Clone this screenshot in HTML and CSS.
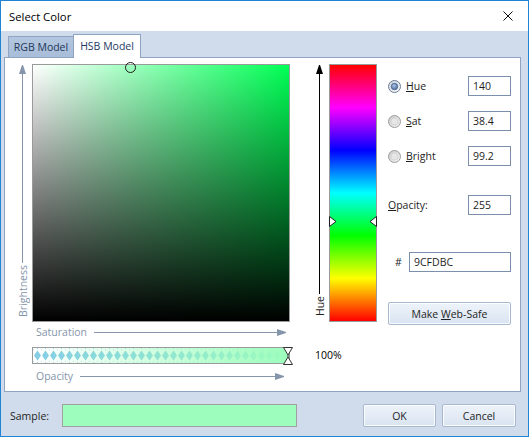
FILE: index.html
```html
<!DOCTYPE html>
<html>
<head>
<meta charset="utf-8">
<title>Select Color</title>
<link rel="stylesheet" href="styles.css">
</head>
<body>
<div class="window">
  <div class="titlebar">
    <span class="title">Select Color</span>
    <svg class="close" width="10" height="10" viewBox="0 0 10 10"><path d="M0.5 0.5 L9.5 9.5 M9.5 0.5 L0.5 9.5" stroke="#111" stroke-width="1" fill="none"/></svg>
  </div>
  <div class="client">
    <div class="tabs">
      <div class="tab tab-rgb">RGB Model</div>
      <div class="tab tab-hsb">HSB Model</div>
    </div>
    <div class="panel">
      <div class="b-axis">
        <div class="head-up gray"></div>
        <div class="vline gray"></div>
        <span class="vlabel gray-text">Brightness</span>
      </div>
      <div class="square"><span class="picker"></span></div>
      <div class="hue-axis">
        <div class="head-up"></div>
        <div class="vline"></div>
        <span class="vlabel">Hue</span>
      </div>
      <div class="huebar">
        <svg class="marker marker-l" width="8" height="11" viewBox="0 0 8 11"><path d="M0.5 0.5 L7 5.5 L0.5 10.5 Z" fill="#fff" stroke="#222"/></svg>
        <svg class="marker marker-r" width="8" height="11" viewBox="0 0 8 11"><path d="M7.5 0.5 L1 5.5 L7.5 10.5 Z" fill="#fff" stroke="#222"/></svg>
      </div>
      <div class="controls">
        <div class="crow">
          <svg class="radio" width="13" height="13" viewBox="0 0 13 13"><defs><linearGradient id="rg1" x1="0" y1="0" x2="1" y2="1"><stop offset="0" stop-color="#c9d0da"/><stop offset="1" stop-color="#fbfcfd"/></linearGradient><radialGradient id="dot" cx="0.4" cy="0.35" r="0.7"><stop offset="0" stop-color="#a9c2e6"/><stop offset="1" stop-color="#4d6c9c"/></radialGradient></defs><circle cx="6.5" cy="6.5" r="6" fill="url(#rg1)" stroke="#6c7c94"/><circle cx="6.5" cy="6.5" r="3.2" fill="url(#dot)" stroke="#3f5b86" stroke-width="0.8"/></svg>
          <span class="rlabel"><u>H</u>ue</span>
          <input class="field num" value="140" readonly>
        </div>
        <div class="crow gap15">
          <svg class="radio" width="13" height="13" viewBox="0 0 13 13"><defs><linearGradient id="rg2" x1="0" y1="0" x2="1" y2="1"><stop offset="0" stop-color="#c8c8c8"/><stop offset="1" stop-color="#f7f7f7"/></linearGradient></defs><circle cx="6.5" cy="6.5" r="6" fill="url(#rg2)" stroke="#9c9c9c"/><circle cx="6.5" cy="6.5" r="3.6" fill="#e6e6e6" stroke="#cfcfcf" stroke-width="0.8"/></svg>
          <span class="rlabel"><u>S</u>at</span>
          <input class="field num" value="38.4" readonly>
        </div>
        <div class="crow gap15">
          <svg class="radio" width="13" height="13" viewBox="0 0 13 13"><defs><linearGradient id="rg3" x1="0" y1="0" x2="1" y2="1"><stop offset="0" stop-color="#c8c8c8"/><stop offset="1" stop-color="#f7f7f7"/></linearGradient></defs><circle cx="6.5" cy="6.5" r="6" fill="url(#rg3)" stroke="#9c9c9c"/><circle cx="6.5" cy="6.5" r="3.6" fill="#e6e6e6" stroke="#cfcfcf" stroke-width="0.8"/></svg>
          <span class="rlabel"><u>B</u>right</span>
          <input class="field num" value="99.2" readonly>
        </div>
        <div class="crow gap29">
          <span class="plabel"><u>O</u>pacity:</span>
          <input class="field num" value="255" readonly>
        </div>
        <div class="crow gap37">
          <span class="hash">#</span>
          <input class="field hex" value="9CFDBC" readonly>
        </div>
        <button class="btn websafe">Make <u>W</u>eb-Safe</button>
      </div>
      <div class="haxis sat gray-text">
        <span>Saturation</span>
        <div class="hline gray"></div>
        <div class="head-right gray"></div>
      </div>
      <div class="opbar">
        <svg class="opsvg" width="256" height="15" viewBox="0 0 256 15">
          <defs>
            <pattern id="chk" width="8" height="15" patternUnits="userSpaceOnUse">
              <rect width="8" height="15" fill="#ffffff"/>
              <path d="M4.5 2.5 L8 7.5 L4.5 12.5 L1 7.5 Z" fill="#84cde6"/>
              <rect x="4" y="0" width="1" height="1" fill="#9ad6ea"/>
              <rect x="0" y="1" width="1" height="1" fill="#b9e3f1"/>
              <rect x="4" y="14" width="1" height="1" fill="#9ad6ea"/>
              <rect x="0" y="13" width="1" height="1" fill="#b9e3f1"/>
            </pattern>
            <linearGradient id="opg" x1="0" y1="0" x2="1" y2="0">
              <stop offset="0" stop-color="#9cfdbc" stop-opacity="0"/>
              <stop offset="1" stop-color="#9cfdbc" stop-opacity="1"/>
            </linearGradient>
          </defs>
          <rect width="256" height="15" fill="url(#chk)"/>
          <rect width="256" height="15" fill="url(#opg)"/>
        </svg>
        <svg class="ophandle" width="10" height="18" viewBox="0 0 10 18"><path d="M0.5 0.5 H9.5 L5 8 Z" fill="#fff" stroke="#333"/><path d="M0.5 17.5 H9.5 L5 10 Z" fill="#fff" stroke="#333"/><path d="M5 8 V10" stroke="#333"/></svg>
      </div>
      <span class="pct">100%</span>
      <div class="haxis op gray-text">
        <span>Opacity</span>
        <div class="hline gray"></div>
        <div class="head-right gray"></div>
      </div>
    </div>
    <div class="bottom">
      <span class="sample-label">Sample:</span>
      <div class="sample"></div>
      <button class="btn ok">OK</button>
      <button class="btn cancel">Cancel</button>
    </div>
  </div>
</div>
</body>
</html>
```
FILE: styles.css
```css
html, body {
  margin: 0;
  padding: 0;
}
body {
  width: 529px;
  height: 437px;
  overflow: hidden;
  font-family: "Open Sans", "Noto Sans", "DejaVu Sans", sans-serif;
  font-size: 10.5px;
  color: #1e1e1e;
}
.window {
  box-sizing: border-box;
  width: 529px;
  height: 437px;
  border: 1px solid #1f84d5;
  background: #d0dcec;
  display: flex;
  flex-direction: column;
}
.titlebar {
  flex: none;
  height: 30px;
  background: #fff;
  display: flex;
  align-items: center;
  padding: 0 15px 0 8px;
}
.title {
  flex: 1;
  font-size: 11.3px;
  color: #000;
}
.close {
  display: block;
}
.client {
  flex: 1;
  display: flex;
  flex-direction: column;
}
.tabs {
  display: flex;
  align-items: flex-end;
  margin-left: 7px;
  padding-top: 3px;
}
.tab {
  box-sizing: border-box;
  display: flex;
  align-items: center;
  justify-content: center;
  border: 1px solid #8ea4c1;
  border-bottom: none;
}
.tab-rgb {
  width: 65px;
  height: 21px;
  border-right: none;
  background: linear-gradient(#b3c6df, #a8bdd9);
  color: #22385a;
}
.tab-hsb {
  width: 68px;
  height: 24px;
  margin-bottom: -1px;
  background: #fff;
  position: relative;
  z-index: 1;
  color: #1c3964;
  padding-bottom: 1px;
}
.panel {
  box-sizing: border-box;
  margin-left: 3px;
  width: 517px;
  height: 335px;
  border: 1px solid #8ea4c1;
  background: #fff;
  padding: 6px 0 0 7px;
  display: grid;
  grid-template-columns: 20px 258px 20px 19px 48px 1fr;
  grid-template-rows: 258px auto auto auto;
  align-content: start;
}
.b-axis, .hue-axis {
  grid-row: 1;
  display: flex;
  flex-direction: column;
  align-items: center;
}
.b-axis {
  grid-column: 1;
  padding: 0 0 5px 1px;
}
.hue-axis {
  grid-column: 4;
  padding-bottom: 6px;
}
.head-up {
  width: 1px;
  height: 0;
  border-left: 3px solid transparent;
  border-right: 3px solid transparent;
  border-bottom: 9px solid #000;
  margin-top: 1px;
}
.head-up.gray {
  border-bottom-color: #8595aa;
}
.vline {
  flex: 1;
  width: 1px;
  background: #000;
}
.vline.gray {
  background: #8595aa;
}
.vlabel {
  writing-mode: vertical-rl;
  transform: rotate(180deg);
  line-height: 12px;
  margin-top: 2px;
  font-size: 10.5px;
}
.gray-text {
  color: #8595aa;
}
.square {
  grid-column: 2;
  grid-row: 1;
  box-sizing: border-box;
  border: 1px solid #9a9a9a;
  position: relative;
  background:
    linear-gradient(to top, #000, rgba(0, 0, 0, 0)),
    linear-gradient(to right, #fff, #00ff55);
}
.picker {
  position: absolute;
  left: 92px;
  top: -3px;
  width: 11px;
  height: 11px;
  box-sizing: border-box;
  border: 1px solid #1a1a1a;
  border-radius: 50%;
}
.huebar {
  grid-column: 5;
  grid-row: 1;
  box-sizing: border-box;
  border: 1px solid #9a9a9a;
  position: relative;
  background: linear-gradient(to bottom, #ff0000 0%, #ff00ff 16.667%, #0000ff 33.333%, #00ffff 50%, #00ff00 66.667%, #ffff00 83.333%, #ff0000 100%);
}
.marker {
  position: absolute;
  top: 151px;
  display: block;
}
.marker-l {
  left: -1px;
}
.marker-r {
  right: -1px;
}
.controls {
  grid-column: 6;
  grid-row: 1 / 5;
  align-self: start;
  margin: 12px 0 0 11px;
  width: 123px;
  display: flex;
  flex-direction: column;
}
.crow {
  display: flex;
  align-items: center;
  height: 20px;
}
.gap15 { margin-top: 15px; }
.gap29 { margin-top: 29px; }
.gap37 { margin-top: 37px; }
.radio {
  display: block;
  flex: none;
}
.rlabel {
  margin-left: 5px;
}
.field {
  box-sizing: border-box;
  height: 20px;
  margin: 0 0 0 auto;
  border: 1px solid #7c90ad;
  padding: 0 0 0 4px;
  font-family: "Open Sans", "Noto Sans", sans-serif;
  font-size: 10.5px;
  color: #1e1e1e;
  background: #fff;
  outline: none;
}
.num {
  width: 43px;
}
.hex {
  width: 102px;
}
.hash {
  margin-left: 7px;
}
.btn {
  box-sizing: border-box;
  height: 23px;
  border: 1px solid #a7b8cf;
  border-radius: 2px;
  background: linear-gradient(#eef3fa, #d9e4f1);
  box-shadow: inset 0 0 0 1px rgba(255, 255, 255, 0.8);
  font-family: "Open Sans", "Noto Sans", sans-serif;
  font-size: 10.5px;
  color: #1e1e1e;
  padding: 0;
}
.websafe {
  margin-top: 30px;
  width: 123px;
}
.haxis {
  grid-column: 2;
  display: flex;
  align-items: center;
  height: 14px;
  padding-left: 4px;
}
.haxis span {
  margin-right: 7px;
}
.sat {
  grid-row: 2;
  margin-top: 3px;
  padding-right: 4px;
}
.op {
  grid-row: 4;
  margin-top: 5px;
  padding-right: 6px;
}
.hline {
  flex: 1;
  height: 1px;
  background: #8595aa;
}
.head-right {
  width: 0;
  height: 1px;
  border-top: 3px solid transparent;
  border-bottom: 3px solid transparent;
  border-left: 9px solid #8595aa;
}
.opbar {
  grid-column: 2;
  grid-row: 3;
  margin-top: 8px;
  box-sizing: border-box;
  height: 17px;
  border: 1px solid #9a9a9a;
  position: relative;
}
.opsvg {
  display: block;
}
.ophandle {
  position: absolute;
  left: 250px;
  top: -1px;
  display: block;
}
.pct {
  grid-column: 3 / 7;
  grid-row: 3;
  margin-top: 8px;
  padding-left: 25px;
  align-self: center;
  line-height: 17px;
  color: #000;
}
.bottom {
  display: flex;
  align-items: center;
  height: 23px;
  margin-top: 12px;
  padding: 0 12px 0 9px;
}
.sample-label {
  width: 52px;
}
.sample {
  box-sizing: border-box;
  width: 235px;
  height: 23px;
  border: 1px solid #a0a0a0;
  background: #9cfdbc;
}
.ok {
  margin-left: auto;
  width: 73px;
}
.cancel {
  margin-left: 6px;
  width: 74px;
}
```
